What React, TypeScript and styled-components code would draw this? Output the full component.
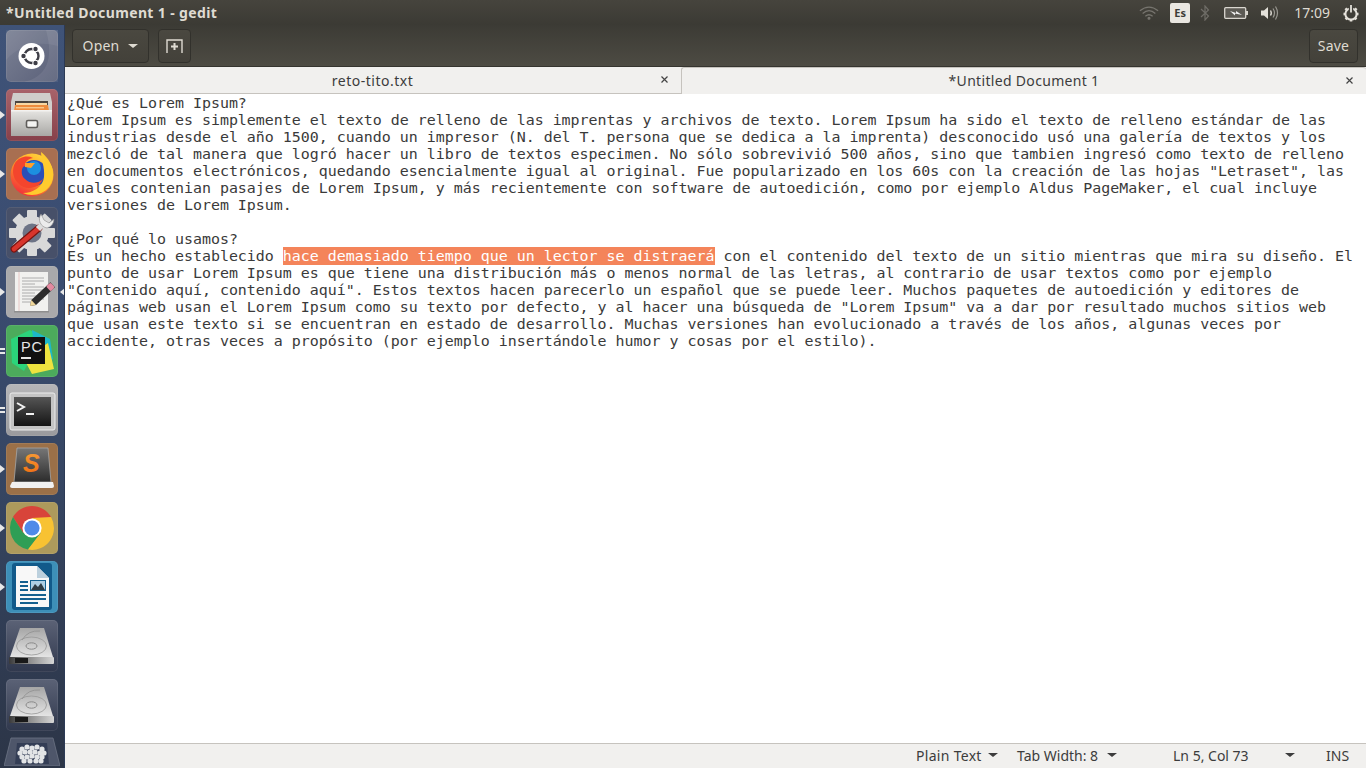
import React from "react";
import styled, { createGlobalStyle } from "styled-components";

const Global = createGlobalStyle`
  html, body { margin: 0; padding: 0; width: 1366px; height: 768px; overflow: hidden; background: #fff; }
  #root { width: 1366px; height: 768px; }
`;

const uiFont = `"Noto Sans", "Open Sans", sans-serif`;

const Desktop = styled.div`
  width: 1366px;
  height: 768px;
  display: flex;
  flex-direction: column;
  overflow: hidden;
`;
const TopBar = styled.header`
  height: 25px;
  flex: none;
  display: flex;
  align-items: center;
  justify-content: space-between;
  background: linear-gradient(#46443d, #3b3a34);
  padding-left: 6px;
  box-sizing: border-box;
`;
const WindowTitle = styled.div`
  font: 700 14px ${uiFont};
  color: #dfdbd2;
  letter-spacing: 0.37px;
`;
const Indicators = styled.div`
  display: flex;
  align-items: center;
  height: 25px;
`;
const IndicatorSlot = styled.span<{ $w: number; $m?: number }>`
  width: ${(p) => p.$w}px;
  margin-left: ${(p) => p.$m ?? 0}px;
  height: 25px;
  display: flex;
  align-items: center;
  justify-content: center;
`;
const LangBadge = styled.span`
  width: 20px;
  height: 20px;
  border-radius: 2px;
  background: #e9e6e0;
  color: #3c3b37;
  font: 700 11px ${uiFont};
  display: flex;
  align-items: center;
  justify-content: center;
`;
const Clock = styled.span`
  font: 400 14px ${uiFont};
  color: #dfdbd2;
  margin-left: 14px;
`;
const Body = styled.div`
  flex: 1;
  display: flex;
  min-height: 0;
`;
const Launcher = styled.nav`
  width: 65px;
  flex: none;
  box-sizing: border-box;
  background: linear-gradient(#3f5378 0%, #3a4c70 35%, #364663 60%, #2c3547 100%);
  border-right: 1px solid #2c3a55;
  padding-top: 5px;
  display: flex;
  flex-direction: column;
  align-items: center;
  gap: 7px;
  overflow: hidden;
  position: relative;
`;
const TileWrap = styled.div`
  position: relative;
  width: 52px;
  height: 52px;
  flex: none;
  margin-right: 1px;
`;
const Tile = styled.div<{ $bg: string }>`
  width: 52px;
  height: 52px;
  border-radius: 5px;
  background: ${(p) => p.$bg};
  box-shadow: inset 0 0 0 1px rgba(255, 255, 255, 0.08);
  display: flex;
  align-items: center;
  justify-content: center;
`;
const Pips = styled.div`
  position: absolute;
  left: -6px;
  top: 50%;
  transform: translateY(-50%);
  display: flex;
  flex-direction: column;
  gap: 2px;
`;
const ArrowPip = styled.span`
  width: 0;
  height: 0;
  border-left: 5px solid #e8e8e8;
  border-top: 4px solid transparent;
  border-bottom: 4px solid transparent;
`;
const BarPip = styled.span`
  width: 5px;
  height: 2px;
  background: #e8e8e8;
`;
const ActivePip = styled.span`
  position: absolute;
  right: -7px;
  top: 50%;
  transform: translateY(-50%);
  width: 0;
  height: 0;
  border-right: 5px solid #e8e8e8;
  border-top: 4px solid transparent;
  border-bottom: 4px solid transparent;
`;
const TrashTile = styled.div`
  width: 56px;
  height: 29px;
  flex: none;
  margin-top: -1px;
  margin-right: 1px;
  display: flex;
`;
const Main = styled.main`
  flex: 1;
  min-width: 0;
  display: flex;
  flex-direction: column;
`;
const Toolbar = styled.div`
  height: 42px;
  flex: none;
  box-sizing: border-box;
  background: linear-gradient(#3c3b35, #4d4b43);
  display: flex;
  align-items: center;
  justify-content: space-between;
  padding: 0 8px 0 7px;
  border-bottom: 1px solid #35342f;
`;
const ToolGroup = styled.div`
  display: flex;
  gap: 9px;
`;
const ToolButton = styled.button<{ $w: number }>`
  width: ${(p) => p.$w}px;
  height: 34px;
  box-sizing: border-box;
  padding: 0;
  border-radius: 4px;
  border: 1px solid #32312c;
  background: linear-gradient(#4a4840, #43413a);
  color: #dfdbd2;
  font: 400 14px ${uiFont};
  display: flex;
  align-items: center;
  justify-content: center;
  gap: 9px;
  letter-spacing: 0.2px;
`;
const Caret = styled.span<{ $c: string; $s?: number }>`
  display: inline-block;
  width: 0;
  height: 0;
  border-left: ${(p) => p.$s ?? 5}px solid transparent;
  border-right: ${(p) => p.$s ?? 5}px solid transparent;
  border-top: ${(p) => (p.$s ?? 5) - 1}px solid ${(p) => p.$c};
`;
const TabBar = styled.div`
  height: 27px;
  flex: none;
  display: flex;
  background: #f0efed;
`;
const Tab = styled.div<{ $w: number; $active?: boolean }>`
  width: ${(p) => p.$w}px;
  flex: none;
  box-sizing: border-box;
  position: relative;
  display: flex;
  align-items: center;
  justify-content: center;
  font: 400 14px ${uiFont};
  letter-spacing: ${(p) => (p.$active ? 0.32 : 0.5)}px;
  color: #3c3c3c;
  padding-right: ${(p) => (p.$active ? 0 : 1)}px;
  padding-bottom: ${(p) => (p.$active ? 2 : 0)}px;
  background: #f1f0ee;
  border-left: ${(p) => (p.$active ? "1px solid #c6c3be" : "none")};
  border-top: ${(p) => (p.$active ? "1px solid #c6c3be" : "none")};
  border-bottom: ${(p) => (p.$active ? "none" : "1px solid #c6c3be")};
  border-top-left-radius: ${(p) => (p.$active ? "3px" : 0)};
  border-top-right-radius: ${(p) => (p.$active ? "3px" : 0)};
`;
const TabClose = styled.span`
  position: absolute;
  right: 12px;
  top: 8px;
  width: 9px;
  height: 9px;
  display: flex;
`;
const Editor = styled.div`
  flex: 1;
  min-height: 0;
  background: #fff;
  padding: 1px 0 0 2px;
  font: 400 14.95px/17px "DejaVu Sans Mono", "Liberation Mono", monospace;
  color: #3a3a3a;
  white-space: pre;
`;
const EditorLine = styled.div`
  height: 17px;
`;
const Selected = styled.span`
  background: #f4845a;
  color: #fff;
`;
const StatusBar = styled.footer`
  height: 25px;
  flex: none;
  box-sizing: border-box;
  background: #f1f0ee;
  border-top: 1px solid #c6c3be;
  padding-bottom: 2px;
  display: flex;
  align-items: center;
  font: 400 14px ${uiFont};
  color: #3c3c3c;
`;
const StatusItem = styled.span<{ $w: number; $l?: number; $sp?: number; $gap?: number }>`
  width: ${(p) => p.$w}px;
  margin-left: ${(p) => p.$l ?? 0}px;
  letter-spacing: ${(p) => p.$sp ?? 0}px;
  flex: none;
  display: flex;
  align-items: center;
  gap: ${(p) => p.$gap ?? 6}px;
`;

const lines = [
  "¿Qué es Lorem Ipsum?",
  "Lorem Ipsum es simplemente el texto de relleno de las imprentas y archivos de texto. Lorem Ipsum ha sido el texto de relleno estándar de las",
  "industrias desde el año 1500, cuando un impresor (N. del T. persona que se dedica a la imprenta) desconocido usó una galería de textos y los",
  "mezcló de tal manera que logró hacer un libro de textos especimen. No sólo sobrevivió 500 años, sino que tambien ingresó como texto de relleno",
  "en documentos electrónicos, quedando esencialmente igual al original. Fue popularizado en los 60s con la creación de las hojas \"Letraset\", las",
  "cuales contenian pasajes de Lorem Ipsum, y más recientemente con software de autoedición, como por ejemplo Aldus PageMaker, el cual incluye",
  "versiones de Lorem Ipsum.",
  "",
  "¿Por qué lo usamos?",
];
const after = [
  "punto de usar Lorem Ipsum es que tiene una distribución más o menos normal de las letras, al contrario de usar textos como por ejemplo",
  "\"Contenido aquí, contenido aquí\". Estos textos hacen parecerlo un español que se puede leer. Muchos paquetes de autoedición y editores de",
  "páginas web usan el Lorem Ipsum como su texto por defecto, y al hacer una búsqueda de \"Lorem Ipsum\" va a dar por resultado muchos sitios web",
  "que usan este texto si se encuentran en estado de desarrollo. Muchas versiones han evolucionado a través de los años, algunas veces por",
  "accidente, otras veces a propósito (por ejemplo insertándole humor y cosas por el estilo).",
];

const UbuntuIcon = () => (
  <svg width="52" height="52" viewBox="0 0 52 52">
    <path d="M0 30 Q20 8 52 16 V0 H0Z" fill="#fff" opacity=".06" />
    <path d="M18 52 Q52 44 40 0 H52 V52Z" fill="#fff" opacity=".08" />
    <circle cx="25.5" cy="26" r="13" fill="#fff" />
    <circle cx="25.5" cy="26" r="7" fill="none" stroke="#3d3d46" strokeWidth="2.4" />
    {[[17.5, 26], [29.5, 19], [29.5, 33]].map(([x, y], i) => (
      <g key={i}>
        <circle cx={x} cy={y} r="3.2" fill="#fff" />
        <circle cx={x} cy={y} r="2.2" fill="#3d3d46" />
      </g>
    ))}
  </svg>
);
const FilesIcon = () => (
  <svg width="52" height="52" viewBox="0 0 52 52">
    <defs>
      <linearGradient id="fileFront" x1="0" y1="0" x2="0" y2="1">
        <stop offset="0" stopColor="#e6e5e2" />
        <stop offset="1" stopColor="#a9a8a5" />
      </linearGradient>
    </defs>
    <path d="M7 4 H44 L46 13 V21 H5 V13Z" fill="#cfcecb" />
    <rect x="9" y="12" width="33" height="10" fill="#4c4640" />
    <rect x="10" y="14" width="31" height="2" fill="#f8d8a4" />
    <path d="M9 16 H42 L43 22 H8Z" fill="#ee8c3e" />
    <path d="M10 18 H38 V19.4 H10Z" fill="#f8c78c" />
    <path d="M5 21 H46 V47 H5Z" fill="url(#fileFront)" />
    <rect x="5" y="21" width="41" height="1.5" fill="#f3f2f0" />
    <rect x="20.5" y="31.5" width="11" height="7" rx="1.5" fill="#f4f4f2" stroke="#5f5d5a" strokeWidth="1.6" />
  </svg>
);
const FirefoxIcon = () => (
  <svg width="50" height="50" viewBox="0 0 50 50">
    <defs>
      <linearGradient id="ff" x1="0.8" y1="0" x2="0.2" y2="1">
        <stop offset="0" stopColor="#ffdc3c" />
        <stop offset=".45" stopColor="#ff9a28" />
        <stop offset="1" stopColor="#f0263c" />
      </linearGradient>
    </defs>
    <circle cx="25" cy="26" r="21.5" fill="url(#ff)" />
    <circle cx="27" cy="24" r="13" fill="#2a4fb8" />
    <circle cx="27" cy="19" r="7" fill="#1c8fe0" />
    <path d="M34 3 C46 12 50 28 42 38 C36 46 24 48 16 44 C26 44 36 38 37 28 C38 18 34 10 34 3Z" fill="#ffcb2e" />
    <path d="M8 14 C12 8 20 6 26 9 C20 10 17 14 19 17 C14 16 13 26 18 30 C24 36 32 34 36 30 C32 40 18 42 11 34 C5 28 5 20 8 14Z" fill="#f4452d" />
    <path d="M18 14 L28 14 L24 19 L18 18Z" fill="#ffa02a" />
  </svg>
);
const SettingsIcon = () => (
  <svg width="50" height="50" viewBox="0 0 50 50">
    <g fill="#d9d9d9">
      <circle cx="25" cy="25" r="17" />
      {[0, 45, 90, 135, 180, 225, 270, 315].map((a) => (
        <rect key={a} x="20" y="2" width="10" height="10" rx="1" transform={`rotate(${a} 25 25)`} />
      ))}
    </g>
    <circle cx="25" cy="25" r="9.5" fill="#6d7486" />
    <path d="M7 41 L32 20" stroke="#7a1410" strokeWidth="7" strokeLinecap="round" />
    <path d="M7 41 L32 20" stroke="#d8352c" strokeWidth="4.6" strokeLinecap="round" />
    <path d="M31 21 L36 16" stroke="#ddd" strokeWidth="6" />
    <path d="M34 6 A9 9 0 0 0 40 20 A9 9 0 0 0 47 11 L42 15 L37 12Z" fill="#ececec" stroke="#888" strokeWidth=".6" />
  </svg>
);
const EditIcon = () => (
  <svg width="52" height="52" viewBox="0 0 52 52">
    <rect x="9" y="6" width="33" height="39" fill="#f1f1ef" />
    <line x1="13" y1="6" x2="13" y2="45" stroke="#e3b4b4" strokeWidth=".7" />
    {[12, 15, 18, 21, 24, 27, 30, 33, 36].map((y, i) => (
      <line key={y} x1="16" y1={y} x2={i % 3 === 2 ? 29 : 38} y2={y} stroke="#9c9c9c" strokeWidth=".8" />
    ))}
    <rect x="8" y="45" width="35" height="1.5" fill="#8e8e8e" />
    <g transform="rotate(-43 24 40)">
      <path d="M24 40 L29 36.6 H55 V43.4 H29Z" fill="#2c2c2c" />
      <path d="M24 40 L29 36.6 V43.4Z" fill="#f0d79a" />
      <rect x="49" y="36.6" width="6" height="6.8" rx="1.5" fill="#e28aa0" />
    </g>
  </svg>
);
const PyCharmIcon = () => (
  <svg width="52" height="52" viewBox="0 0 52 52">
    <path d="M5 14 L24 5 L36 12 L18 46 L6 38Z" fill="#2bd47a" />
    <path d="M26 5 L44 14 L47 34 L38 42 L28 20Z" fill="#1db8c8" />
    <path d="M18 34 L42 18 L48 44 L26 49Z" fill="#eee33f" />
    <rect x="12" y="12" width="27" height="27" fill="#111" />
    <text x="15" y="27" fontFamily="Liberation Sans" fontWeight="400" fontSize="14.5" fill="#e6e6e6" textLength="21">PC</text>
    <rect x="15" y="32" width="10" height="2" fill="#e6e6e6" />
  </svg>
);
const TerminalIcon = () => (
  <svg width="52" height="52" viewBox="0 0 52 52">
    <defs>
      <linearGradient id="termBg" x1="0" y1="0" x2="0" y2="1">
        <stop offset="0" stopColor="#555" />
        <stop offset="1" stopColor="#151515" />
      </linearGradient>
    </defs>
    <rect x="4" y="9" width="45" height="37" rx="2" fill="#c4c4c4" stroke="#ececec" strokeWidth="1" />
    <rect x="8" y="13" width="37" height="29" fill="url(#termBg)" />
    <path d="M11 19 L18 23 L11 27" fill="none" stroke="#f2f2f2" strokeWidth="2" />
    <rect x="20" y="29" width="8" height="2" fill="#f2f2f2" />
  </svg>
);
const SublimeIcon = () => (
  <svg width="52" height="52" viewBox="0 0 52 52">
    <defs>
      <linearGradient id="subBox" x1="0" y1="0" x2="0" y2="1">
        <stop offset="0" stopColor="#767676" />
        <stop offset="1" stopColor="#2c2c2c" />
      </linearGradient>
      <linearGradient id="subS" x1="0" y1="0" x2="0" y2="1">
        <stop offset="0" stopColor="#f6a13a" />
        <stop offset="1" stopColor="#f06a10" />
      </linearGradient>
    </defs>
    <path d="M11 5 H42 L45 39 H8Z" fill="url(#subBox)" stroke="#a6a6a6" strokeWidth=".8" />
    <path d="M6 39 H47 L48 43 Q48 45 46 45 H6 Q4 45 4 43Z" fill="#f1f1f1" />
    <text x="17" y="29" fontFamily="Liberation Sans" fontWeight="700" fontStyle="italic" fontSize="25" fill="url(#subS)">S</text>
  </svg>
);
const ChromeIcon = () => (
  <svg width="46" height="46" viewBox="0 0 46 46">
    <path d="M42.05 12 A22 22 0 0 0 3.95 12 L14.3 28 L23 13 H42.05Z" fill="#d8443a" />
    <path d="M3.95 12 A22 22 0 0 0 19 44.6 L31.7 28 H14.3Z" fill="#2f9e55" />
    <path d="M42.05 12 A22 22 0 0 1 19 44.6 L31.7 28 L23 13Z" fill="#f8c232" />
    <circle cx="23" cy="23" r="9.6" fill="#fff" />
    <circle cx="23" cy="23" r="7.6" fill="#4f8ae8" />
  </svg>
);
const WriterIcon = () => (
  <svg width="52" height="52" viewBox="0 0 52 52">
    <rect x="6" y="2" width="40" height="47" rx="3" fill="#125a8a" />
    <path d="M10 5 H31 L43 17 V46 H10Z" fill="#f8f8f8" />
    <path d="M31 5 L43 17 H31Z" fill="#bcd0dd" />
    <rect x="14" y="20" width="8" height="2" fill="#14608f" />
    <rect x="14" y="24" width="8" height="2" fill="#14608f" />
    <rect x="14" y="28" width="8" height="2" fill="#14608f" />
    <rect x="24" y="19" width="16" height="11" fill="#14608f" />
    <rect x="25" y="20" width="14" height="9" fill="#aecfe4" />
    <path d="M25 29 L29 23 L32 26 L35 22 L39 29Z" fill="#2f3c44" />
    <rect x="14" y="33" width="26" height="2" fill="#14608f" />
    <rect x="14" y="37" width="26" height="2" fill="#14608f" />
    <rect x="14" y="41" width="18" height="2" fill="#14608f" />
  </svg>
);
const DiskIcon = () => (
  <svg width="52" height="52" viewBox="0 0 52 52">
    <defs>
      <linearGradient id="diskTop" x1="0" y1="0" x2="0" y2="1">
        <stop offset="0" stopColor="#a6a6a6" />
        <stop offset="1" stopColor="#e4e4e4" />
      </linearGradient>
      <linearGradient id="diskFront" x1="0" y1="0" x2="1" y2="0">
        <stop offset="0" stopColor="#3a3a3a" />
        <stop offset=".45" stopColor="#8c8c8c" />
        <stop offset="1" stopColor="#d6d6d6" />
      </linearGradient>
    </defs>
    <path d="M14 8 H38 L47 37 H4Z" fill="url(#diskTop)" />
    <ellipse cx="25.5" cy="26" rx="15" ry="9" fill="none" stroke="#979797" strokeWidth=".8" />
    <ellipse cx="25.5" cy="26" rx="5.5" ry="3.2" fill="none" stroke="#8a8a8a" strokeWidth="1" />
    <path d="M16 20 Q22 10 34 11" fill="none" stroke="#8f8f8f" strokeWidth=".8" />
    <rect x="3" y="37" width="45" height="7" rx="1" fill="url(#diskFront)" />
    <rect x="9" y="38" width="13" height="5" fill="#191919" />
  </svg>
);
const crumbs = [[18, 12], [23, 10], [28, 11], [33, 10], [38, 12], [16, 16], [21, 15], [26, 15], [31, 15], [36, 16], [40, 16], [18, 20], [23, 20], [28, 19], [33, 20], [38, 20], [20, 24], [26, 24], [32, 24], [37, 24]];
const TrashIcon = () => (
  <svg width="56" height="29" viewBox="0 0 56 29">
    <path d="M7 1 H49 L56 29 H0Z" fill="#4e566a" stroke="#6d7585" strokeWidth=".8" />
    <path d="M13 6 H43 L45 27 H11Z" fill="#333d55" />
    {crumbs.map(([x, y]) => (
      <circle key={`${x}-${y}`} cx={x} cy={y} r="2.6" fill="#e2e4e6" />
    ))}
  </svg>
);
const PowerIcon = () => (
  <svg width="18" height="18" viewBox="0 0 18 18" fill="none">
    <circle cx="9" cy="10" r="5.6" stroke="#e4e1da" strokeWidth="2" />
    <g stroke="#e4e1da" strokeWidth="2.6">
      <path d="M1.5 10 H3.8" /><path d="M14.2 10 H16.5" /><path d="M9 15 V17.5" />
      <path d="M3.4 4.4 L5.2 6.2" /><path d="M14.6 4.4 L12.8 6.2" />
      <path d="M3.6 15.4 L5.2 13.8" /><path d="M14.4 15.4 L12.8 13.8" />
    </g>
    <path d="M9 0 V9.5" stroke="#413f39" strokeWidth="4.4" />
    <path d="M9 1 V8.5" stroke="#e4e1da" strokeWidth="1.8" />
  </svg>
);

const apps = [
  { bg: "linear-gradient(135deg,#7c8295,#5a6079)", icon: <UbuntuIcon />, pip: null },
  { bg: "linear-gradient(#a8636a,#87404a)", icon: <FilesIcon />, pip: "arrow" },
  { bg: "#a86f51", icon: <FirefoxIcon />, pip: "arrow" },
  { bg: "#475069", icon: <SettingsIcon />, pip: null },
  { bg: "#a9a9ab", icon: <EditIcon />, pip: "arrow", active: true },
  { bg: "#4cab5c", icon: <PyCharmIcon />, pip: "bars" },
  { bg: "linear-gradient(#b6b6b8,#9a9a9e)", icon: <TerminalIcon />, pip: "bars" },
  { bg: "#9b7048", icon: <SublimeIcon />, pip: "arrow" },
  { bg: "#ad9a5c", icon: <ChromeIcon />, pip: "arrow" },
  { bg: "#3d8fb8", icon: <WriterIcon />, pip: "arrow" },
  { bg: "linear-gradient(#5b6276,#30384d)", icon: <DiskIcon />, pip: null },
  { bg: "linear-gradient(#5b6276,#30384d)", icon: <DiskIcon />, pip: null },
];

const CloseGlyph = () => (
  <svg width="9" height="9" viewBox="0 0 9 9" stroke="#444" strokeWidth="1.2"><path d="M1.5 1.5 L7.5 7.5 M7.5 1.5 L1.5 7.5" /></svg>
);

export default function App() {
  return (
    <Desktop>
      <Global />
      <TopBar>
        <WindowTitle>*Untitled Document 1 - gedit</WindowTitle>
        <Indicators>
          <IndicatorSlot $w={22}>
            <svg width="20" height="15" viewBox="0 0 22 16" fill="none" stroke="#77756f" strokeWidth="1.4">
              <path d="M1 6 Q11 -2 21 6" />
              <path d="M4 9 Q11 3 18 9" />
              <path d="M7 12 Q11 9 15 12" />
              <circle cx="11" cy="14.4" r="1" fill="#77756f" />
            </svg>
          </IndicatorSlot>
          <IndicatorSlot $w={20} $m={10}><LangBadge>Es</LangBadge></IndicatorSlot>
          <IndicatorSlot $w={10} $m={10}>
            <svg width="10" height="16" viewBox="0 0 10 16" fill="none" stroke="#6f6d67" strokeWidth="1.2">
              <path d="M1 4 L8.5 11 L5 15 V1 L8.5 5 L1 12" />
            </svg>
          </IndicatorSlot>
          <IndicatorSlot $w={24} $m={14}>
            <svg width="24" height="14" viewBox="0 0 24 14">
              <rect x=".7" y="1.7" width="21" height="10.6" rx="1" fill="#5c5a54" stroke="#d9d6cf" strokeWidth="1.3" />
              <rect x="22" y="5" width="2" height="4" fill="#d9d6cf" />
              <path d="M6 5 L12 7 L12 5 L18 9 L11 7.5 L11 9.5Z" fill="#eee" />
            </svg>
          </IndicatorSlot>
          <IndicatorSlot $w={20} $m={12}>
            <svg width="20" height="16" viewBox="0 0 20 16" fill="none">
              <path d="M1 5.5 H4 L8 2 V14 L4 10.5 H1Z" fill="#e4e1da" />
              <path d="M10.5 5.5 Q12 8 10.5 10.5" stroke="#e4e1da" strokeWidth="1.4" />
              <path d="M13 3.5 Q16 8 13 12.5" stroke="#9a9892" strokeWidth="1.2" />
              <path d="M15.5 1.5 Q19.5 8 15.5 14.5" stroke="#9a9892" strokeWidth="1.2" />
            </svg>
          </IndicatorSlot>
          <Clock>17:09</Clock>
          <IndicatorSlot $w={20} $m={11}><PowerIcon /></IndicatorSlot>
          <IndicatorSlot $w={5} />
        </Indicators>
      </TopBar>
      <Body>
        <Launcher>
          {apps.map((a, i) => (
            <TileWrap key={i}>
              {a.pip === "arrow" && <Pips><ArrowPip /></Pips>}
              {a.pip === "bars" && <Pips><BarPip /><BarPip /></Pips>}
              <Tile $bg={a.bg}>{a.icon}</Tile>
              {a.active && <ActivePip />}
            </TileWrap>
          ))}
          <TrashTile><TrashIcon /></TrashTile>
        </Launcher>
        <Main>
          <Toolbar>
            <ToolGroup>
              <ToolButton $w={77}>Open <Caret $c="#dfdbd2" /></ToolButton>
              <ToolButton $w={33}>
                <svg width="17" height="16" viewBox="0 0 17 16" fill="none" stroke="#dfdbd2" strokeWidth="1.4">
                  <path d="M1 15 V2 H16 V15" />
                  <path d="M8.5 5 V12 M5 8.5 H12" strokeWidth="2" />
                </svg>
              </ToolButton>
            </ToolGroup>
            <ToolButton $w={49}>Save</ToolButton>
          </Toolbar>
          <TabBar>
            <Tab $w={616}>
              reto-tito.txt
              <TabClose><CloseGlyph /></TabClose>
            </Tab>
            <Tab $w={685} $active>
              *Untitled Document 1
              <TabClose><CloseGlyph /></TabClose>
            </Tab>
          </TabBar>
          <Editor>
            {lines.map((l, i) => <EditorLine key={i}>{l}</EditorLine>)}
            <EditorLine>Es un hecho establecido <Selected>hace demasiado tiempo que un lector se distraerá</Selected> con el contenido del texto de un sitio mientras que mira su diseño. El</EditorLine>
            {after.map((l, i) => <EditorLine key={i}>{l}</EditorLine>)}
          </Editor>
          <StatusBar>
            <StatusItem $w={101} $l={851} $sp={0.3}>Plain Text <Caret $c="#3c3c3c" $s={5} /></StatusItem>
            <StatusItem $w={156} $gap={9}>Tab Width: 8 <Caret $c="#3c3c3c" $s={5} /></StatusItem>
            <StatusItem $w={112}>Ln 5, Col 73</StatusItem>
            <StatusItem $w={41}><Caret $c="#3c3c3c" $s={5} /></StatusItem>
            <StatusItem $w={30}>INS</StatusItem>
          </StatusBar>
        </Main>
      </Body>
    </Desktop>
  );
}
